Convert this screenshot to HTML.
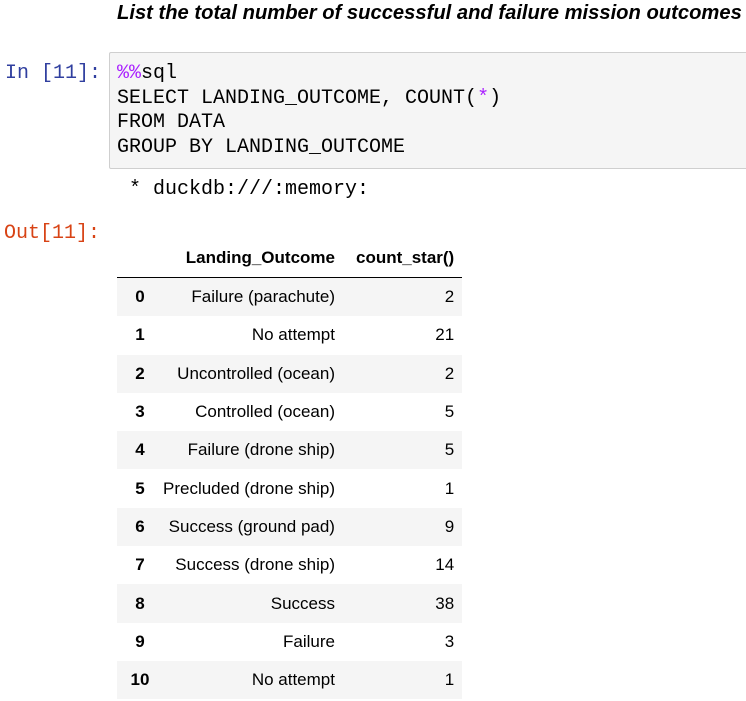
<!DOCTYPE html>
<html><head><style>
body{margin:0;width:746px;height:701px;background:#fff;position:relative;overflow:hidden;font-family:"Liberation Sans",sans-serif;}
.t{position:absolute;left:117px;top:2px;font-size:20.2px;font-weight:bold;font-style:italic;white-space:nowrap;color:#000;}
.mono{font-family:"Liberation Mono","DejaVu Sans Mono",monospace;font-size:20px;white-space:pre;position:absolute;}
.code{position:absolute;left:109px;top:52px;width:650px;height:115px;background:#f5f5f5;border:1px solid #cfcfcf;border-radius:2px;}
.p{color:#aa22ff}
table{position:absolute;left:117px;top:239px;border-collapse:collapse;font-size:17px;color:#000}
th{font-weight:bold;text-align:right;height:38px;border-bottom:1.5px solid #000;padding:0}
td{text-align:right;height:38.3px;padding:0}
th:nth-child(1),td:nth-child(1){font-weight:bold;text-align:center;width:30px;padding:0 8px}
th:nth-child(2),td:nth-child(2){padding:0 2px 0 0}
th:nth-child(3),td:nth-child(3){padding:0 8px 0 19px}
tbody tr:nth-child(odd){background:#f5f5f5}
</style></head><body>
<div class="t">List the total number of successful and failure mission outcomes</div>
<div class="mono" style="left:5px;top:62px;color:#303f9f">In [11]:</div>
<div class="code"></div>
<div class="mono" style="left:117px;top:62px;line-height:24.5px;color:#000"><span class="p">%%</span>sql
SELECT LANDING_OUTCOME, COUNT(<span class="p">*</span>)
FROM DATA
GROUP BY LANDING_OUTCOME</div>
<div class="mono" style="left:129px;top:178px;color:#000">* duckdb:///:memory:</div>
<div class="mono" style="left:4px;top:222px;color:#d84315">Out[11]:</div>
<table>
<thead><tr><th></th><th>Landing_Outcome</th><th>count_star()</th></tr></thead>
<tbody>
<tr><td>0</td><td>Failure (parachute)</td><td>2</td></tr>
<tr><td>1</td><td>No attempt</td><td>21</td></tr>
<tr><td>2</td><td>Uncontrolled (ocean)</td><td>2</td></tr>
<tr><td>3</td><td>Controlled (ocean)</td><td>5</td></tr>
<tr><td>4</td><td>Failure (drone ship)</td><td>5</td></tr>
<tr><td>5</td><td>Precluded (drone ship)</td><td>1</td></tr>
<tr><td>6</td><td>Success (ground pad)</td><td>9</td></tr>
<tr><td>7</td><td>Success (drone ship)</td><td>14</td></tr>
<tr><td>8</td><td>Success</td><td>38</td></tr>
<tr><td>9</td><td>Failure</td><td>3</td></tr>
<tr><td>10</td><td>No attempt</td><td>1</td></tr>
</tbody></table>
</body></html>
